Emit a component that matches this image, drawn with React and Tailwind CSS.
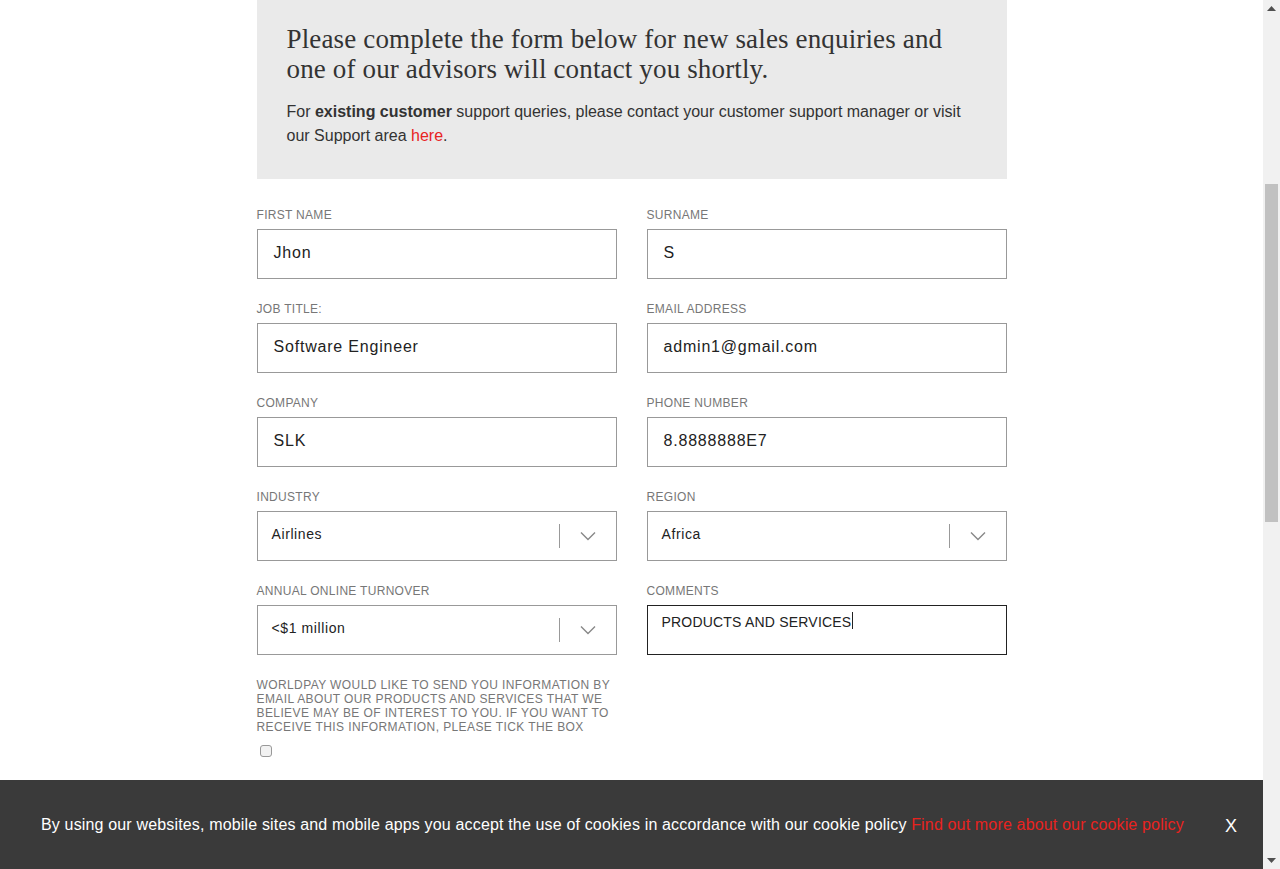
import React from "react";

const sans = { fontFamily: '"Liberation Sans", Arial, sans-serif' };

function Label({ children }) {
  return (
    <div className="text-[12px] leading-[15px] tracking-[0.3px] text-[#777] uppercase mb-[6px]" style={sans}>
      {children}
    </div>
  );
}

function TextField({ label, value }) {
  return (
    <div>
      <Label>{label}</Label>
      <div className="h-[50px] border border-[#999] bg-white flex items-center px-[16px] pb-[3px] text-[16px] text-[#222] tracking-[0.8px]" style={sans}>
        {value}
      </div>
    </div>
  );
}

function SelectField({ label, value }) {
  return (
    <div>
      <Label>{label}</Label>
      <div className="h-[50px] border border-[#999] bg-white flex items-center pl-[14px] text-[14px] text-[#222] tracking-[0.6px]" style={sans}>
        <span className="flex-1 pb-[4px]">{value}</span>
        <span className="w-px h-[24px] bg-[#999]"></span>
        <span className="w-[56px] flex items-center justify-center">
          <svg width="16" height="10" viewBox="0 0 16 10" fill="none">
            <path d="M1 1.5 L8 8.5 L15 1.5" stroke="#888" strokeWidth="1.4" />
          </svg>
        </span>
      </div>
    </div>
  );
}

export default function App() {
  return (
    <div className="w-[1280px] h-[869px] overflow-hidden flex bg-white">
      <div className="w-[1263px] h-[869px] flex flex-col">
        <div className="flex-1 overflow-hidden">
          <div className="w-[750px] mx-auto">
            <div className="bg-[#eaeaea] h-[179px] px-[30px] pt-[24px]">
              <h1
                className="max-w-[680px] text-[27px] leading-[30px] tracking-[0.15px] text-[#333]"
                style={{ fontFamily: '"Liberation Serif", "Times New Roman", serif' }}
              >
                Please complete the form below for new sales enquiries and one of our advisors will contact you shortly.
              </h1>
              <p className="mt-[16px] text-[16px] leading-[24px] text-[#333]" style={sans}>
                For <b>existing customer</b> support queries, please contact your customer support manager or visit our Support area{" "}
                <span className="text-[#e8231f]">here</span>.
              </p>
            </div>
            <div className="grid grid-cols-2 gap-x-[30px] gap-y-[23px] pt-[29px]">
              <TextField label="First Name" value="Jhon" />
              <TextField label="Surname" value="S" />
              <TextField label="Job Title:" value="Software Engineer" />
              <TextField label="Email Address" value="admin1@gmail.com" />
              <TextField label="Company" value="SLK" />
              <TextField label="Phone Number" value="8.8888888E7" />
              <SelectField label="Industry" value="Airlines" />
              <SelectField label="Region" value="Africa" />
              <SelectField label="Annual Online Turnover" value="<$1 million" />
              <div>
                <Label>Comments</Label>
                <div className="h-[50px] border border-[#222] bg-white px-[14px] pt-[6px] text-[14px] text-[#222] tracking-[0.2px] flex items-start" style={sans}>
                  <span>PRODUCTS AND SERVICES</span>
                  <span className="w-px h-[17px] bg-[#222] ml-[1px]"></span>
                </div>
              </div>
            </div>
            <div className="grid grid-cols-2 gap-x-[30px] pt-[23px]">
              <div>
                <p className="text-[12px] leading-[14px] text-[#777] tracking-[0.4px] uppercase" style={sans}>
                  Worldpay would like to send you information by email about our products and services that we believe may be of interest to you. If you want to receive this information, please tick the box
                </p>
                <div className="mt-[11px] ml-[3px] w-[12px] h-[12px] border border-[#999] rounded-[3px] bg-[#f2f2f2]"></div>
              </div>
              <div></div>
            </div>
          </div>
        </div>
        <div className="h-[89px] bg-[#3a3a3a] flex items-center pl-[41px] pr-[26px]">
          <p className="flex-1 text-[16px] text-white tracking-[0.16px]" style={sans}>
            By using our websites, mobile sites and mobile apps you accept the use of cookies in accordance with our cookie policy{" "}
            <span className="text-[#e8231f]">Find out more about our cookie policy</span>
          </p>
          <span className="text-white text-[18px] mt-[4px]" style={sans}>X</span>
        </div>
      </div>
      <div className="w-[17px] h-[869px] bg-[#f1f1f1] flex flex-col items-center">
        <div className="h-[17px] flex items-center justify-center">
          <svg width="9" height="5" viewBox="0 0 9 5"><path d="M0 5 L4.5 0 L9 5 Z" fill="#505050" /></svg>
        </div>
        <div className="mt-[167px] w-[13px] h-[338px] bg-[#c1c1c1]"></div>
        <div className="flex-1"></div>
        <div className="h-[17px] flex items-center justify-center">
          <svg width="9" height="5" viewBox="0 0 9 5"><path d="M0 0 L4.5 5 L9 0 Z" fill="#505050" /></svg>
        </div>
      </div>
    </div>
  );
}
